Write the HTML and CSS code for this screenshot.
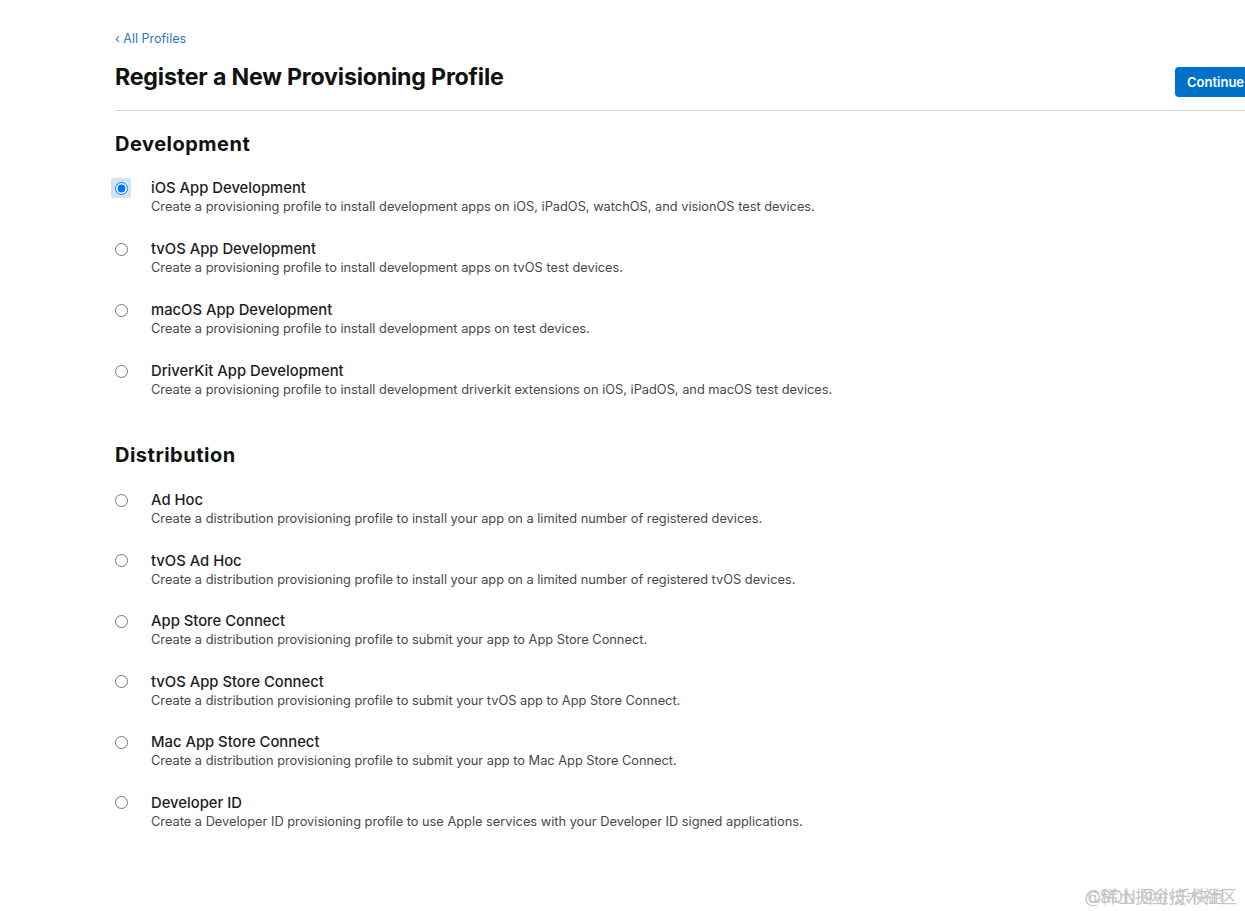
FILE: index.html
```html
<!DOCTYPE html>
<html lang="en">
<head>
<meta charset="utf-8">
<title>Register a New Provisioning Profile</title>
<link rel="stylesheet" href="styles.css">
</head>
<body>
<div class="page">
  <a class="back" href="#">&lsaquo; All Profiles</a>
  <header class="head">
    <h1 class="title">Register a New Provisioning Profile</h1>
    <button class="continue">Continue</button>
  </header>

  <section class="group">
    <h2 class="group-title">Development</h2>
    <label class="option">
      <span class="radio-wrap focused"><input type="radio" name="p" checked></span>
      <span class="text"><span class="name">iOS App Development</span><span class="desc">Create a provisioning profile to install development apps on iOS, iPadOS, watchOS, and visionOS test devices.</span></span>
    </label>
    <label class="option">
      <span class="radio-wrap"><input type="radio" name="p"></span>
      <span class="text"><span class="name">tvOS App Development</span><span class="desc">Create a provisioning profile to install development apps on tvOS test devices.</span></span>
    </label>
    <label class="option">
      <span class="radio-wrap"><input type="radio" name="p"></span>
      <span class="text"><span class="name">macOS App Development</span><span class="desc">Create a provisioning profile to install development apps on test devices.</span></span>
    </label>
    <label class="option">
      <span class="radio-wrap"><input type="radio" name="p"></span>
      <span class="text"><span class="name">DriverKit App Development</span><span class="desc">Create a provisioning profile to install development driverkit extensions on iOS, iPadOS, and macOS test devices.</span></span>
    </label>
  </section>

  <section class="group">
    <h2 class="group-title">Distribution</h2>
    <label class="option">
      <span class="radio-wrap"><input type="radio" name="p"></span>
      <span class="text"><span class="name">Ad Hoc</span><span class="desc">Create a distribution provisioning profile to install your app on a limited number of registered devices.</span></span>
    </label>
    <label class="option">
      <span class="radio-wrap"><input type="radio" name="p"></span>
      <span class="text"><span class="name">tvOS Ad Hoc</span><span class="desc">Create a distribution provisioning profile to install your app on a limited number of registered tvOS devices.</span></span>
    </label>
    <label class="option">
      <span class="radio-wrap"><input type="radio" name="p"></span>
      <span class="text"><span class="name">App Store Connect</span><span class="desc">Create a distribution provisioning profile to submit your app to App Store Connect.</span></span>
    </label>
    <label class="option">
      <span class="radio-wrap"><input type="radio" name="p"></span>
      <span class="text"><span class="name">tvOS App Store Connect</span><span class="desc">Create a distribution provisioning profile to submit your tvOS app to App Store Connect.</span></span>
    </label>
    <label class="option">
      <span class="radio-wrap"><input type="radio" name="p"></span>
      <span class="text"><span class="name">Mac App Store Connect</span><span class="desc">Create a distribution provisioning profile to submit your app to Mac App Store Connect.</span></span>
    </label>
    <label class="option">
      <span class="radio-wrap"><input type="radio" name="p"></span>
      <span class="text"><span class="name">Developer ID</span><span class="desc">Create a Developer ID provisioning profile to use Apple services with your Developer ID signed applications.</span></span>
    </label>
  </section>
</div>
<div class="watermark"><span class="wm1">@稀土掘金技术社区</span><span class="wm2">CSDN @小乐快跑</span></div>
</body>
</html>
```
FILE: styles.css
```css
html, body {
  margin: 0;
  padding: 0;
  background: #ffffff;
  overflow: hidden;
}
body {
  font-family: Inter, "Noto Sans", "Noto Sans CJK SC", sans-serif;
  color: #1d1d1f;
}
.page {
  margin-left: 115px;
  width: 1140px;
  padding-top: 31px;
}
.back {
  display: block;
  font-size: 12.5px;
  line-height: 16px;
  color: #2f78c4;
  text-decoration: none;
}
.head {
  display: flex;
  justify-content: space-between;
  align-items: flex-start;
  border-bottom: 1px solid #dcdcdc;
  padding: 15px 0 13px;
}
.title {
  margin: 0;
  font-size: 23.2px;
  line-height: 30px;
  font-weight: 700;
  letter-spacing: -0.2px;
  color: #111;
}
.continue {
  margin-top: 5px;
  background: #0071c9;
  color: #fff;
  border: none;
  border-radius: 4px;
  font-family: inherit;
  font-size: 13px;
  font-weight: 600;
  height: 30px;
  padding: 0 12px;
  width: 80px;
  text-align: left;
}
.group {
  margin-top: 20px;
}
.group-title {
  margin: 0 0 21px;
  font-size: 20px;
  line-height: 26px;
  font-weight: 700;
  letter-spacing: 0.5px;
  color: #111;
}
.group + .group .group-title {
  margin-bottom: 22px;
}
.option {
  display: flex;
  align-items: flex-start;
  height: 61px;
}
.group + .group .option {
  height: 60.6px;
}
.radio-wrap {
  width: 20px;
  height: 20px;
  display: flex;
  align-items: center;
  justify-content: center;
  margin-left: -4px;
  margin-right: 20px;
}
.radio-wrap.focused {
  background: #cfe3f9;
  border-radius: 2px;
}
.radio-wrap input {
  margin: 0;
  width: 13px;
  height: 13px;
}
.text {
  display: flex;
  flex-direction: column;
}
.name {
  font-size: 14.8px;
  line-height: 20px;
  font-weight: 500;
  color: #1d1d1f;
}
.desc {
  font-size: 12.8px;
  line-height: 18px;
  color: #48484b;
}
.watermark {
  position: absolute;
  right: 8px;
  bottom: 6px;
  width: 160px;
  height: 22px;
  font-size: 17px;
  color: #b8b8b8;
  opacity: 0.8;
}
.wm1, .wm2 {
  position: absolute;
  right: 0;
  top: 0;
  white-space: nowrap;
}
.wm2 {
  right: 12px;
}
```
